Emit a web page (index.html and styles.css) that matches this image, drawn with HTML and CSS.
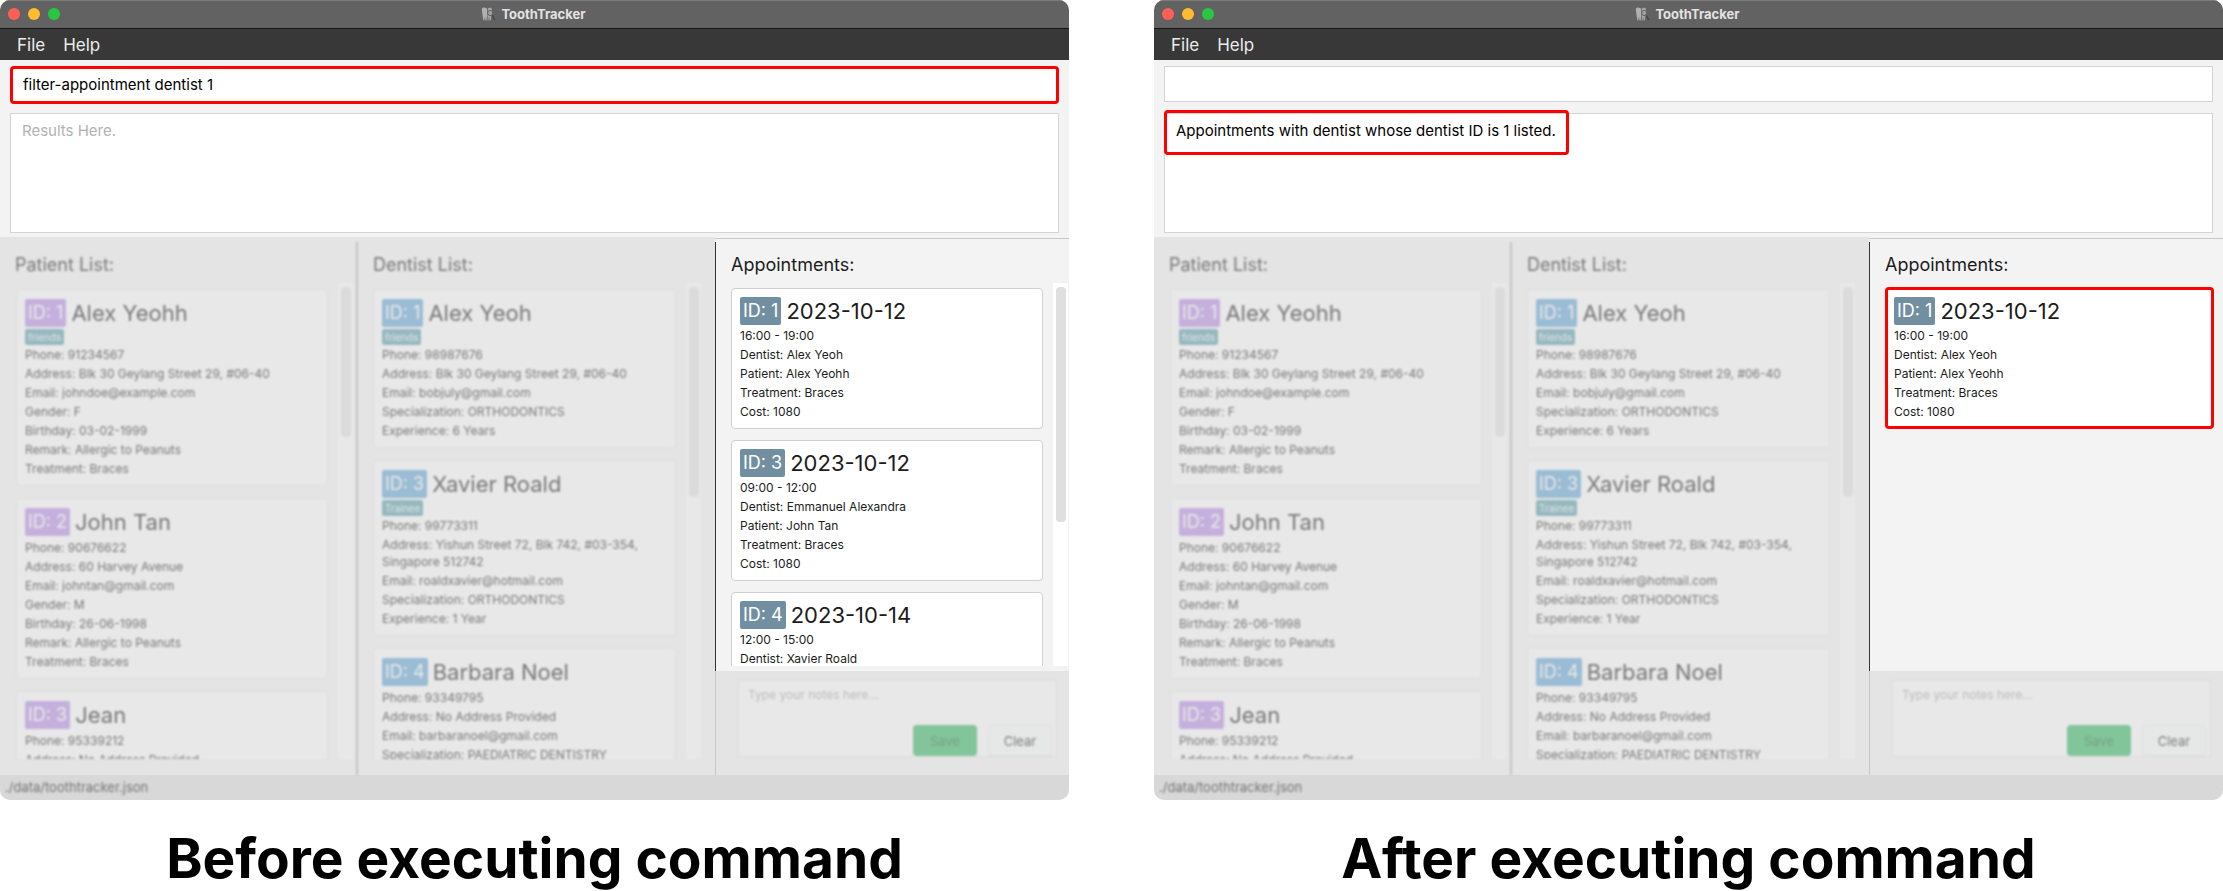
FILE: index.html
```html
<!DOCTYPE html>
<html lang="en">
<head>
<meta charset="utf-8">
<title>ToothTracker</title>
<link rel="stylesheet" href="styles.css">
</head>
<body>
<svg class="defs" aria-hidden="true">
  <symbol id="tooth" viewBox="0 0 15 14">
    <path fill="#b0b0b0" d="M.8 2.500C1 .6 2.500.3 4 .8l2 .7L6.200 8 5.600 13.500H4.500L4 9.500l-.8 4h-.9L1.500 8z"/>
    <path fill="#a6a6a6" d="M6.800 1.500C8.500.3 10.800.2 11 2.500L10.600 8l-.9 5.500H8.600L8 9.500 7.400 13.500H6.600z"/>
    <circle cx="9.200" cy="6" r="2.600" fill="#a0a0a0" stroke="#5a5a5a" stroke-width=".9"/>
    <path d="m11 8.300 3 4.500" stroke="#454545" stroke-width="1.400"/>
  </symbol>
</svg>
<main class="comparison">
  <figure class="shot">
    <div class="window">
      <header class="titlebar">
        <span class="lights"><i class="light close"></i><i class="light minimise"></i><i class="light expand"></i></span>
        <svg class="app-icon" aria-hidden="true"><use href="#tooth"/></svg>
        <span class="app-name">ToothTracker</span>
      </header>
      <nav class="menubar"><button type="button">File</button><button type="button">Help</button></nav>
      <section class="console">
        <div class="command-row"><input class="command marked" type="text" aria-label="Command" value="filter-appointment dentist 1"></div>
        <div class="results-row"><textarea class="results" aria-label="Results" readonly placeholder="Results Here."></textarea></div>
      </section>
      <div class="panes">
        <section class="pane dimmed ruled">
          <div class="soft">
            <h2>Patient List:</h2>
            <div class="scroller">
              <ul class="cards">
                <li class="card patient"><h3><span class="id">ID: 1</span>Alex Yeohh</h3><span class="tag">friends</span><p>Phone: 91234567</p><p>Address: Blk 30 Geylang Street 29, #06-40</p><p>Email: johndoe@example.com</p><p>Gender: F</p><p>Birthday: 03-02-1999</p><p>Remark: Allergic to Peanuts</p><p>Treatment: Braces</p></li>
                <li class="card patient"><h3><span class="id">ID: 2</span>John Tan</h3><p>Phone: 90676622</p><p>Address: 60 Harvey Avenue</p><p>Email: johntan@gmail.com</p><p>Gender: M</p><p>Birthday: 26-06-1998</p><p>Remark: Allergic to Peanuts</p><p>Treatment: Braces</p></li>
                <li class="card patient"><h3><span class="id">ID: 3</span>Jean</h3><p>Phone: 95339212</p><p>Address: No Address Provided</p></li>
              </ul>
              <div class="track"><div class="thumb short"></div></div>
            </div>
          </div>
        </section>
        <section class="pane dimmed">
          <div class="soft">
            <h2>Dentist List:</h2>
            <div class="scroller wide-end">
              <ul class="cards">
                <li class="card dentist"><h3><span class="id">ID: 1</span>Alex Yeoh</h3><span class="tag">friends</span><p>Phone: 98987676</p><p>Address: Blk 30 Geylang Street 29, #06-40</p><p>Email: bobjuly@gmail.com</p><p>Specialization: ORTHODONTICS</p><p>Experience: 6 Years</p></li>
                <li class="card dentist"><h3><span class="id">ID: 3</span>Xavier Roald</h3><span class="tag">Trainee</span><p>Phone: 99773311</p><p>Address: Yishun Street 72, Blk 742, #03-354, Singapore 512742</p><p>Email: roaldxavier@hotmail.com</p><p>Specialization: ORTHODONTICS</p><p>Experience: 1 Year</p></li>
                <li class="card dentist"><h3><span class="id">ID: 4</span>Barbara Noel</h3><p>Phone: 93349795</p><p>Address: No Address Provided</p><p>Email: barbaranoel@gmail.com</p><p>Specialization: PAEDIATRIC DENTISTRY</p></li>
              </ul>
              <div class="track"><div class="thumb medium"></div></div>
            </div>
          </div>
        </section>
        <div class="side">
          <section class="pane appointments">
            <div class="body">
              <h2>Appointments:</h2>
              <div class="scroller">
                <ul class="cards">
                  <li class="card appointment"><h3><span class="id">ID: 1</span>2023-10-12</h3><p>16:00 - 19:00</p><p>Dentist: Alex Yeoh</p><p>Patient: Alex Yeohh</p><p>Treatment: Braces</p><p>Cost: 1080</p></li>
                  <li class="card appointment"><h3><span class="id">ID: 3</span>2023-10-12</h3><p>09:00 - 12:00</p><p>Dentist: Emmanuel Alexandra</p><p>Patient: John Tan</p><p>Treatment: Braces</p><p>Cost: 1080</p></li>
                  <li class="card appointment"><h3><span class="id">ID: 4</span>2023-10-14</h3><p>12:00 - 15:00</p><p>Dentist: Xavier Roald</p></li>
                </ul>
                <div class="track"><div class="thumb long"></div></div>
              </div>
            </div>
          </section>
          <section class="notes">
            <div class="note-box">
              <textarea aria-label="Notes" placeholder="Type your notes here..."></textarea>
              <div class="actions"><button class="save" type="button">Save</button><button class="clear" type="button">Clear</button></div>
            </div>
          </section>
        </div>
      </div>
      <footer class="statusbar"><span>./data/toothtracker.json</span></footer>
    </div>
    <figcaption>Before executing command</figcaption>
  </figure>

  <figure class="shot">
    <div class="window">
      <header class="titlebar">
        <span class="lights"><i class="light close"></i><i class="light minimise"></i><i class="light expand"></i></span>
        <svg class="app-icon" aria-hidden="true"><use href="#tooth"/></svg>
        <span class="app-name">ToothTracker</span>
      </header>
      <nav class="menubar"><button type="button">File</button><button type="button">Help</button></nav>
      <section class="console">
        <div class="command-row"><input class="command" type="text" aria-label="Command"></div>
        <div class="results-row"><textarea class="results" aria-label="Results" readonly>Appointments with dentist whose dentist ID is 1 listed.</textarea><span class="callout"></span></div>
      </section>
      <div class="panes">
        <section class="pane dimmed ruled">
          <div class="soft">
            <h2>Patient List:</h2>
            <div class="scroller">
              <ul class="cards">
                <li class="card patient"><h3><span class="id">ID: 1</span>Alex Yeohh</h3><span class="tag">friends</span><p>Phone: 91234567</p><p>Address: Blk 30 Geylang Street 29, #06-40</p><p>Email: johndoe@example.com</p><p>Gender: F</p><p>Birthday: 03-02-1999</p><p>Remark: Allergic to Peanuts</p><p>Treatment: Braces</p></li>
                <li class="card patient"><h3><span class="id">ID: 2</span>John Tan</h3><p>Phone: 90676622</p><p>Address: 60 Harvey Avenue</p><p>Email: johntan@gmail.com</p><p>Gender: M</p><p>Birthday: 26-06-1998</p><p>Remark: Allergic to Peanuts</p><p>Treatment: Braces</p></li>
                <li class="card patient"><h3><span class="id">ID: 3</span>Jean</h3><p>Phone: 95339212</p><p>Address: No Address Provided</p></li>
              </ul>
              <div class="track"><div class="thumb short"></div></div>
            </div>
          </div>
        </section>
        <section class="pane dimmed">
          <div class="soft">
            <h2>Dentist List:</h2>
            <div class="scroller wide-end">
              <ul class="cards">
                <li class="card dentist"><h3><span class="id">ID: 1</span>Alex Yeoh</h3><span class="tag">friends</span><p>Phone: 98987676</p><p>Address: Blk 30 Geylang Street 29, #06-40</p><p>Email: bobjuly@gmail.com</p><p>Specialization: ORTHODONTICS</p><p>Experience: 6 Years</p></li>
                <li class="card dentist"><h3><span class="id">ID: 3</span>Xavier Roald</h3><span class="tag">Trainee</span><p>Phone: 99773311</p><p>Address: Yishun Street 72, Blk 742, #03-354, Singapore 512742</p><p>Email: roaldxavier@hotmail.com</p><p>Specialization: ORTHODONTICS</p><p>Experience: 1 Year</p></li>
                <li class="card dentist"><h3><span class="id">ID: 4</span>Barbara Noel</h3><p>Phone: 93349795</p><p>Address: No Address Provided</p><p>Email: barbaranoel@gmail.com</p><p>Specialization: PAEDIATRIC DENTISTRY</p></li>
              </ul>
              <div class="track"><div class="thumb medium"></div></div>
            </div>
          </div>
        </section>
        <div class="side">
          <section class="pane appointments">
            <div class="body">
              <h2>Appointments:</h2>
              <div class="scroller single">
                <ul class="cards">
                  <li class="card appointment marked"><h3><span class="id">ID: 1</span>2023-10-12</h3><p>16:00 - 19:00</p><p>Dentist: Alex Yeoh</p><p>Patient: Alex Yeohh</p><p>Treatment: Braces</p><p>Cost: 1080</p></li>
                </ul>
              </div>
            </div>
          </section>
          <section class="notes">
            <div class="note-box">
              <textarea aria-label="Notes" placeholder="Type your notes here..."></textarea>
              <div class="actions"><button class="save" type="button">Save</button><button class="clear" type="button">Clear</button></div>
            </div>
          </section>
        </div>
      </div>
      <footer class="statusbar"><span>./data/toothtracker.json</span></footer>
    </div>
    <figcaption>After executing command</figcaption>
  </figure>
</main>
</body>
</html>
```
FILE: styles.css
```css
* { box-sizing: border-box; margin: 0; padding: 0; }

body {
  background: #fff;
  color: #1c1c1c;
  font-family: Inter, Roboto, sans-serif;
}

button, input, textarea { font: inherit; color: inherit; border: 0; background: none; }
textarea { display: block; resize: none; overflow: hidden; }
ul { list-style: none; }
.defs { position: absolute; width: 0; height: 0; }

.comparison {
  display: grid;
  grid-template-columns: 1fr 1fr;
  gap: 85px;
  height: 100vh;
}
.shot { display: flex; flex-direction: column; min-width: 0; min-height: 0; }
.shot figcaption {
  padding: 25px 0 0;
  height: 91px;
  text-align: center;
  color: #000;
  font-size: 55px;
  line-height: 66px;
  font-weight: 700;
}

.window {
  flex: 1;
  min-height: 0;
  display: flex;
  flex-direction: column;
  overflow: hidden;
  border-radius: 10px;
  background: #f3f3f3;
}

/* Title bar and menu */
.titlebar {
  position: relative;
  display: flex;
  align-items: center;
  justify-content: center;
  gap: 5px;
  height: 29px;
  padding: 0 2px 2px 0;
  border-top: 1px solid #7b7b7b;
  border-bottom: 1px solid #161616;
  background: #626262;
  color: #e2e2e2;
}
.lights { position: absolute; left: 8px; top: 7px; display: flex; gap: 8px; }
.light { width: 12px; height: 12px; border-radius: 50%; }
.close { background: #ff5f57; }
.minimise { background: #febc2e; }
.expand { background: #28c840; }
.app-icon { width: 15px; height: 14px; }
.app-name { font-size: 13px; line-height: 16px; font-weight: 700; }
.menubar {
  display: flex;
  gap: 18px;
  padding: 0 17px;
  height: 31px;
  background: #383838;
  color: #ececec;
}
.menubar button { font-size: 17px; line-height: 30px; }

/* Command entry and results */
.console { padding: 6px 10px 4px; color: #000; font-size: 15px; }
.command-row { height: 38px; margin-bottom: 9px; }
.command {
  display: block;
  width: 100%;
  height: 36px;
  padding: 0 12px;
  border: 1px solid #d4d4d4;
  background: #fff;
}
.command.marked { height: 38px; padding: 0 10px 2px; border: 3px solid #f00; border-radius: 4px; }
.results-row { position: relative; }
.results {
  width: 100%;
  height: 120px;
  padding: 7px 11px;
  border: 1px solid #d4d4d4;
  background: #fff;
  line-height: 20px;
}
.results::placeholder { color: #b2b2b2; }
.callout {
  position: absolute;
  left: 0;
  top: -3px;
  width: 405px;
  height: 45px;
  border: 3px solid #f00;
  border-radius: 4px;
}

/* Three panes */
.panes { flex: 1; min-height: 0; display: grid; grid-template-columns: 358fr 357fr 354fr; }
.pane { display: flex; min-width: 0; min-height: 0; padding-top: 5px; }
.dimmed { background: #e4e4e4; color: #787878; }
.soft {
  flex: 1;
  min-width: 0;
  display: flex;
  flex-direction: column;
  padding-bottom: 16px;
  filter: blur(1px);
}
.ruled .soft { border-right: 2px solid #c3c3c3; }
.body {
  flex: 1;
  min-width: 0;
  display: flex;
  flex-direction: column;
  margin-top: 4px;
  padding-bottom: 5px;
  border-left: 1px solid #333;
}
h2 { padding: 11px 15px 6px; font-size: 18px; line-height: 24px; font-weight: 400; }
.scroller { flex: 1; min-height: 0; display: flex; gap: 10px; padding: 0 3px 0 16px; overflow: hidden; }
.scroller.wide-end { padding: 0 14px 0 15px; }
.cards { flex: 1; min-width: 0; padding-top: 6px; }
.card {
  margin-bottom: 12px;
  padding: 9px 8px 7px;
  border: 1px solid #dedede;
  border-radius: 4px;
  background: #e8e8e8;
}
.card h3 { display: flex; gap: 5px; margin-bottom: 2px; font-size: 22px; line-height: 28px; font-weight: 400; }
.id { padding: 0 3px; border-radius: 2px; font-size: 18px; color: #e9e9e9; }
.patient .id { background: #c5b0dd; }
.dentist .id { background: #9abcd4; }
.card p { padding: 1px 0; font-size: 12px; line-height: 17px; }
.tag {
  display: block;
  width: fit-content;
  padding: 0 3px;
  border-radius: 2px;
  background: #96b8bf;
  color: #dfe6e8;
  font-size: 10px;
  line-height: 16px;
}
.track { width: 15px; padding: 4px 2px 0 3px; background: #e8e8e8; }
.thumb { border-radius: 4px; background: #dbdbdb; }
.short { height: 150px; }
.medium { height: 210px; }
.long { height: 235px; }

/* Appointments and notes */
.side { display: flex; flex-direction: column; min-width: 0; min-height: 0; background: #f3f3f3; }
.appointments {
  flex: 1;
  padding-top: 1px;
  background: linear-gradient(#c8c8c8, #c8c8c8) 0 1px / 100% 1px no-repeat;
}
.appointments .scroller { padding: 0 1px 0 15px; }
.appointments .cards { padding-top: 5px; }
.appointments .track { background: #fff; }
.appointments .thumb { background: #dfdfdf; }
.appointment { margin-bottom: 11px; padding: 8px 8px 7px; border-color: #d0d0d0; background: #fff; }
.appointment h3 { margin-bottom: 1px; }
.appointment .id { background: #728fa2; color: #fff; }
.appointments .single { padding: 0 9px 0 15px; }
.appointments .single .cards { padding-top: 4px; }
.appointment.marked { padding: 7px 6px 5px; border: 3px solid #f00; }
.notes { padding: 9px 12px 18px 22px; background: #e4e4e4; border-left: 1px solid #c8c8c8; }
.note-box { position: relative; filter: blur(1px); }
.note-box textarea {
  width: 100%;
  height: 77px;
  padding: 5px 9px;
  border: 1px solid #dcdcdc;
  background: #e8e8e8;
  font-size: 12px;
  line-height: 17px;
}
.note-box textarea::placeholder { color: #bdbdbd; }
.actions { position: absolute; right: 5px; bottom: 1px; display: flex; gap: 11px; }
.actions button { width: 64px; height: 31px; border-radius: 4px; font-size: 13px; }
.actions .save { background: #82c59b; color: #76a386; }
.actions .clear { border: 1px solid #dedede; background: #e6e8e7; color: #7c7c7c; }

.statusbar {
  height: 25px;
  padding: 0 5px;
  background: #d8d8d8;
  color: #747474;
  font-size: 13px;
  line-height: 25px;
}
.statusbar span { filter: blur(1px); display: inline-block; }
```
